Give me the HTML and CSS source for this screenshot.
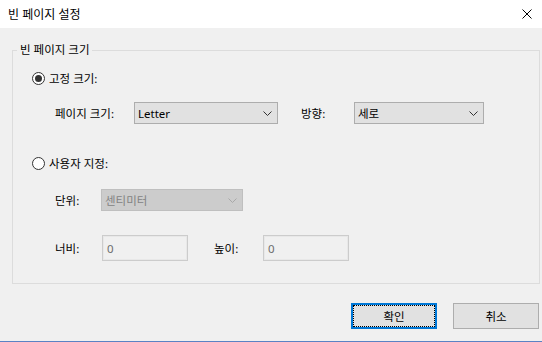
FILE: index.html
```html
<!DOCTYPE html>
<html lang="ko">
<head>
<meta charset="utf-8">
<title>빈 페이지 설정</title>
<link rel="stylesheet" href="styles.css">
</head>
<body>
<div class="window">
  <div class="titlebar">
    <span class="title">빈 페이지 설정</span>
    <span class="close" aria-label="닫기">
      <svg width="10" height="10" viewBox="0 0 10 10"><path d="M0.5 0.5 L9.5 9.5 M9.5 0.5 L0.5 9.5" stroke="#000" stroke-width="1" fill="none"/></svg>
    </span>
  </div>
  <fieldset class="group">
    <legend>빈 페이지 크기</legend>
    <div class="group-body">
      <div class="radio-row">
        <span class="radio on"></span><span>고정 크기:</span>
      </div>
      <div class="field-row row-size">
        <span class="lbl lbl-size">페이지 크기:</span>
        <div class="combo w-size"><span>Letter</span><svg class="chev" width="9" height="5" viewBox="0 0 9 5"><polyline points="0.5,0.5 4.5,4.5 8.5,0.5" fill="none" stroke="#333" stroke-width="1"/></svg></div>
        <span class="lbl lbl-dir">방향:</span>
        <div class="combo w-dir"><span>세로</span><svg class="chev" width="9" height="5" viewBox="0 0 9 5"><polyline points="0.5,0.5 4.5,4.5 8.5,0.5" fill="none" stroke="#333" stroke-width="1"/></svg></div>
      </div>
      <div class="radio-row row-custom">
        <span class="radio"></span><span>사용자 지정:</span>
      </div>
      <div class="field-row row-unit">
        <span class="lbl lbl-unit">단위:</span>
        <div class="combo disabled w-unit"><span>센티미터</span><svg class="chev" width="9" height="5" viewBox="0 0 9 5"><polyline points="0.5,0.5 4.5,4.5 8.5,0.5" fill="none" stroke="#a8a8a8" stroke-width="1"/></svg></div>
      </div>
      <div class="field-row row-dims">
        <span class="lbl lbl-w">너비:</span>
        <div class="num">0</div>
        <span class="lbl lbl-h">높이:</span>
        <div class="num">0</div>
      </div>
    </div>
  </fieldset>
  <div class="actions">
    <button class="btn primary">확인</button>
    <button class="btn">취소</button>
  </div>
</div>
</body>
</html>
```

FILE: styles.css
```css
html, body {
  margin: 0;
  padding: 0;
}
body {
  width: 542px;
  height: 342px;
  overflow: hidden;
  background: #f0f0f0;
}
.window {
  width: 542px;
  height: 342px;
  box-sizing: border-box;
  border-bottom: 1px solid #5b82c4;
  background: #f0f0f0;
  font-family: "Noto Sans", "Noto Sans CJK KR", sans-serif;
  font-size: 11.5px;
  color: #000;
}
.titlebar {
  height: 28px;
  background: #fff;
  display: flex;
  align-items: center;
  justify-content: space-between;
  padding: 0 10px 0 8px;
  font-size: 12px;
}
.close {
  display: flex;
  width: 10px;
  height: 10px;
  margin-top: -1px;
}
.group {
  margin: 14px 2px 0 12px;
  padding: 0;
  border: 1px solid #dcdcdc;
  min-width: 0;
}
.group legend {
  margin-left: 4px;
  padding: 0 3px;
  line-height: 16px;
}
.group-body {
  display: flex;
  flex-direction: column;
  padding: 12px 0 22px 19px;
}
.radio-row {
  display: flex;
  align-items: center;
  gap: 4px;
  height: 16px;
}
.radio {
  width: 13px;
  height: 13px;
  box-sizing: border-box;
  border: 1px solid #333;
  border-radius: 50%;
  background: #fff;
  display: flex;
  align-items: center;
  justify-content: center;
}
.radio.on::after {
  content: "";
  width: 7px;
  height: 7px;
  border-radius: 50%;
  background: #333;
}
.field-row {
  display: flex;
  align-items: center;
  margin-left: 23px;
}
.row-size { margin-top: 16px; }
.row-custom { margin-top: 31px; }
.row-unit { margin-top: 18px; }
.row-dims { margin-top: 24px; }
.lbl { flex: none; }
.lbl-size { width: 79px; }
.lbl-dir { width: 53px; margin-left: 23px; }
.lbl-unit { width: 46px; }
.lbl-w { width: 47px; }
.lbl-h { width: 49px; margin-left: 26px; }
.combo {
  display: flex;
  align-items: center;
  justify-content: space-between;
  height: 22px;
  box-sizing: border-box;
  border: 1px solid #adadad;
  background: #e1e1e1;
  padding: 0 5px 0 3px;
}
.combo.disabled {
  background: #cccccc;
  border-color: #bfbfbf;
  color: #838383;
}
.chev { flex: none; }
.w-size { width: 144px; }
.w-dir { width: 130px; }
.w-unit { width: 142px; }
.num {
  width: 86px;
  height: 26px;
  box-sizing: border-box;
  border: 1px solid #cccccc;
  box-shadow: inset 0 0 0 1px #e8e8e8;
  background: #f0f0f0;
  color: #6d6d6d;
  padding-left: 4px;
  display: flex;
  align-items: center;
}
.actions {
  display: flex;
  justify-content: flex-end;
  gap: 16px;
  margin-top: 19px;
  padding-right: 3px;
}
.btn {
  width: 86px;
  height: 26px;
  box-sizing: border-box;
  border: 1px solid #adadad;
  background: #e1e1e1;
  font-family: "Noto Sans", "Noto Sans CJK KR", sans-serif;
  font-size: 11.5px;
  color: #000;
  padding: 0;
  margin: 0;
}
.btn.primary {
  border: 2px solid #0078d7;
  outline: 1px dotted #000;
  outline-offset: -3px;
}
```
